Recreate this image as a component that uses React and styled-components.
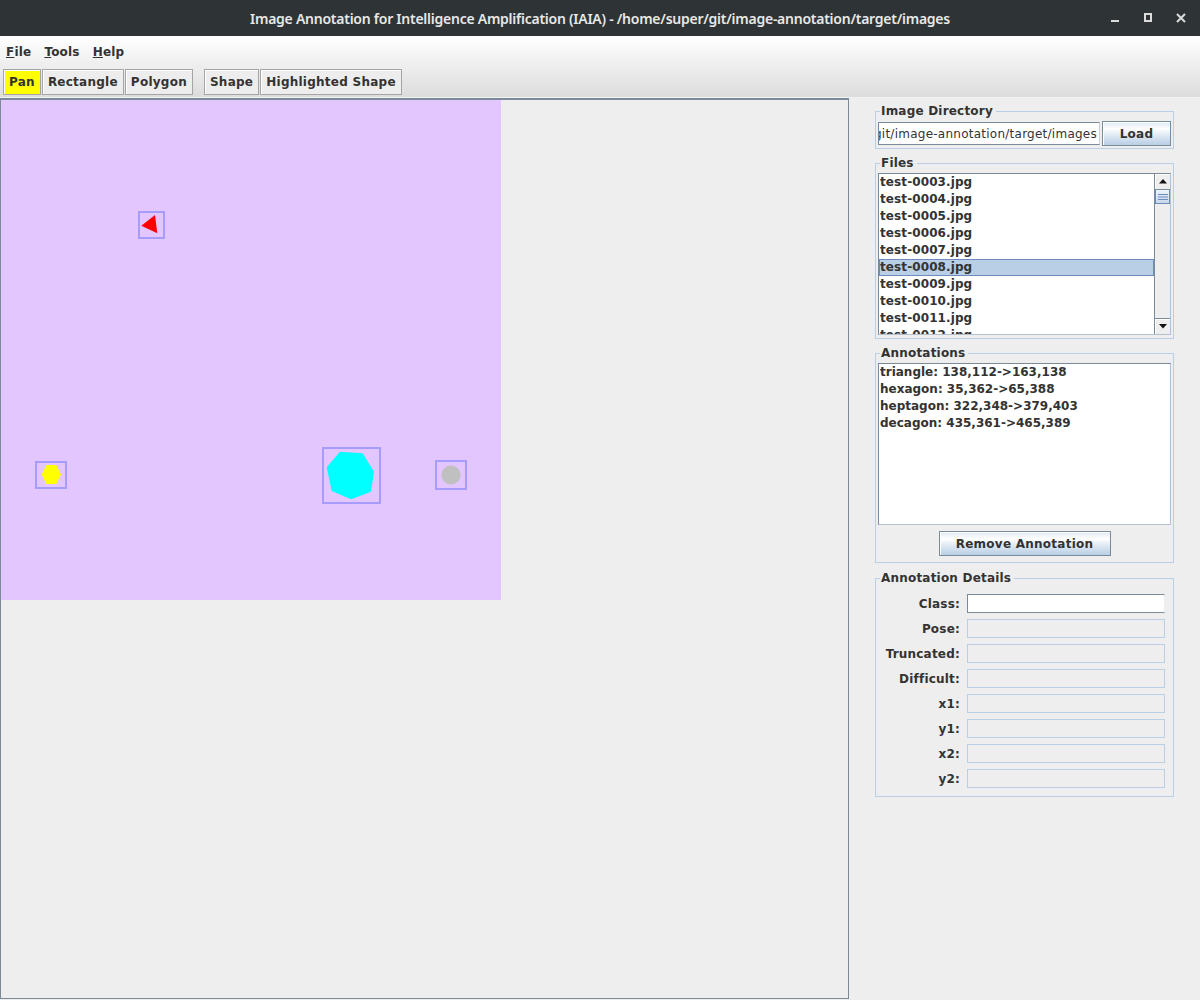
import React from "react";
import styled, { createGlobalStyle } from "styled-components";

const GlobalStyle = createGlobalStyle`
  html, body {
    margin: 0;
    padding: 0;
    background: #eeeeee;
  }
  body {
    width: 1200px;
    height: 1000px;
    overflow: hidden;
    font-family: "DejaVu Sans", "Liberation Sans", sans-serif;
    color: #333333;
  }
  * {
    box-sizing: border-box;
  }
`;

const files = [
  "test-0003.jpg",
  "test-0004.jpg",
  "test-0005.jpg",
  "test-0006.jpg",
  "test-0007.jpg",
  "test-0008.jpg",
  "test-0009.jpg",
  "test-0010.jpg",
  "test-0011.jpg",
  "test-0012.jpg",
];

const annotations = [
  "triangle: 138,112->163,138",
  "hexagon: 35,362->65,388",
  "heptagon: 322,348->379,403",
  "decagon: 435,361->465,389",
];

const details = ["Class:", "Pose:", "Truncated:", "Difficult:", "x1:", "y1:", "x2:", "y2:"];

const tools = [
  { label: "Pan", active: true },
  { label: "Rectangle" },
  { label: "Polygon" },
  { sep: true },
  { label: "Shape" },
  { label: "Highlighted Shape" },
];

// regular polygon points for the decagon
const regular = (cx, cy, r, n, rot = 0) =>
  Array.from({ length: n }, (_, i) => {
    const a = rot + (i * 2 * Math.PI) / n;
    return `${(cx + r * Math.cos(a)).toFixed(1)},${(cy + r * Math.sin(a)).toFixed(1)}`;
  }).join(" ");

const Window = styled.div`
  width: 1200px;
  height: 1000px;
  display: flex;
  flex-direction: column;
  background: #eeeeee;
  overflow: hidden;
`;

const TitleBar = styled.div`
  flex: none;
  height: 36px;
  display: grid;
  grid-template-columns: 1fr auto 1fr;
  align-items: center;
  background: #2e3335;
  color: #e8e8e7;
  font-family: "Noto Sans", "DejaVu Sans", sans-serif;
  font-size: 14px;
  font-weight: 600;
  letter-spacing: -0.25px;
`;

const TitleText = styled.div`
  grid-column: 2;
  white-space: nowrap;
`;

const WindowControls = styled.div`
  grid-column: 3;
  justify-self: end;
  display: flex;
  padding-right: 3px;
  height: 36px;
`;

const ControlButton = styled.div`
  width: 33px;
  height: 36px;
  display: flex;
  align-items: center;
  justify-content: center;
  color: #dcdcdc;
`;

const Chrome = styled.div`
  flex: none;
  background: linear-gradient(#ffffff, #dcdcdc);
  border-bottom: 1px solid #f2f2f2;
`;

const MenuBar = styled.div`
  height: 28px;
  display: flex;
  align-items: center;
  padding-top: 4px;
`;

const MenuItem = styled.div`
  padding: 0 6px;
  margin-right: 1px;
  font-size: 12px;
  font-weight: bold;
  line-height: 14px;
  letter-spacing: 0.2px;
  color: #333333;
`;

const Mnemonic = styled.span`
  text-decoration: underline;
  text-underline-offset: 1px;
`;

const ToolBar = styled.div`
  height: 33px;
  display: flex;
  align-items: flex-start;
  gap: 1px;
  padding: 5px 0 0 3px;
`;

const ToolButton = styled.div`
  height: 26px;
  padding: 0 5px;
  display: flex;
  align-items: center;
  border: 1px solid #a5a5a5;
  box-shadow: inset 1px 1px 0 #ffffff;
  background: ${(p) => (p.$active ? "#ffff00" : "#ededed")};
  font-size: 12px;
  font-weight: bold;
  letter-spacing: 0.25px;
  color: #333333;
  white-space: nowrap;
`;

const ToolSeparator = styled.div`
  width: 9px;
`;

const Main = styled.div`
  flex: 1;
  display: flex;
  min-height: 0;
`;

const CanvasPane = styled.div`
  flex: none;
  width: 849px;
  height: 901px;
  border: 1px solid #7a8a99;
  border-top-width: 2px;
  background: #eeeeee;
  overflow: hidden;
`;

const ImageCanvas = styled.svg`
  display: block;
`;

const SidePanel = styled.div`
  flex: none;
  width: 351px;
  min-width: 0;
  display: flex;
  flex-direction: column;
  padding: 6px 26px 0 26px;
`;

const Group = styled.fieldset`
  margin: ${(p) => p.$mt || 0}px 0 0 0;
  padding: ${(p) => p.$pad};
  border: 1px solid #b8cfe5;
  min-width: 0;
  width: 299px;
`;

const GroupTitle = styled.legend`
  margin-left: 2px;
  padding: 0 3px 0 1px;
  font-size: 12px;
  font-weight: bold;
  line-height: 14px;
  letter-spacing: 0.2px;
  color: #333333;
`;

const ButtonRow = styled.div`
  height: 25px;
  margin-top: ${(p) => p.$mt || 0}px;
  display: flex;
  align-items: center;
  justify-content: ${(p) => (p.$center ? "center" : "flex-start")};
  gap: 2px;
`;

const DirField = styled.div`
  flex: 1;
  min-width: 0;
  height: 23px;
  display: flex;
  align-items: center;
  justify-content: flex-end;
  overflow: hidden;
  white-space: nowrap;
  padding-right: 2px;
  background: #ffffff;
  border: 1px solid #7a8a99;
  border-right-color: #c9d3dc;
  font-size: 12px;
  letter-spacing: 0.25px;
  color: #333333;
`;

const PushButton = styled.div`
  width: ${(p) => p.$w}px;
  height: 25px;
  flex: none;
  display: flex;
  align-items: center;
  justify-content: center;
  border: 1px solid #7a8a99;
  box-shadow: inset 1px 1px 0 #ffffff;
  background: linear-gradient(#dde8f3 0%, #ffffff 30%, #dde8f3 60%, #b8cfe5 100%);
  font-size: 12px;
  font-weight: bold;
  letter-spacing: 0.25px;
  color: #333333;
`;

const ListBox = styled.div`
  height: 162px;
  display: flex;
  background: #ffffff;
  border: 1px solid #7a8a99;
  border-right-color: #b4c0cc;
  border-bottom-color: #b4c0cc;
  overflow: hidden;
`;

const ListItems = styled.div`
  flex: 1;
  min-width: 0;
  overflow: hidden;
`;

const ListRow = styled.div`
  height: 17px;
  line-height: 15px;
  border: 1px solid ${(p) => (p.$selected ? "#6d8bbd" : "transparent")};
  background: ${(p) => (p.$selected ? "#b8cfe5" : "transparent")};
  font-size: 12px;
  font-weight: bold;
  letter-spacing: ${(p) => p.$ls || 0}px;
  color: #333333;
  white-space: nowrap;
`;

const ScrollBar = styled.div`
  flex: none;
  width: 16px;
  display: flex;
  flex-direction: column;
  background: #eeeeee;
  border-left: 1px solid #7a8a99;
`;

const ScrollArrow = styled.div`
  flex: none;
  height: 16px;
  display: flex;
  align-items: center;
  justify-content: center;
  background: #eeeeee;
  border-${(p) => (p.$down ? "top" : "bottom")}: 1px solid #7a8a99;
  box-shadow: inset 1px 1px 0 #ffffff;
`;

const ScrollThumb = styled.div`
  flex: none;
  height: 14px;
  display: flex;
  align-items: center;
  justify-content: center;
  background: linear-gradient(#eef4fa, #c6d8ec);
  border: 1px solid #6d8bbd;
  border-top: none;
`;

const ScrollTrack = styled.div`
  flex: 1;
`;

const DetailsGrid = styled.div`
  display: grid;
  grid-template-columns: 1fr 198px;
  grid-auto-rows: 19px;
  column-gap: 7px;
  row-gap: 6px;
  align-items: center;
  padding-right: 6px;
`;

const DetailLabel = styled.div`
  text-align: right;
  font-size: 12px;
  font-weight: bold;
  letter-spacing: 0.2px;
  color: #333333;
  white-space: nowrap;
`;

const DetailField = styled.div`
  height: 19px;
  background: ${(p) => (p.$editable ? "#ffffff" : "#eeeeee")};
  border: 1px solid ${(p) => (p.$editable ? "#7a8a99" : "#b8cfe5")};
  border-right-color: ${(p) => (p.$editable ? "#eeeeee" : "#b8cfe5")};
`;

const Arrow = ({ down }) => (
  <svg width="8" height="5" viewBox="0 0 8 5">
    <polygon points={down ? "0,0 8,0 4,4.5" : "0,4.5 8,4.5 4,0"} fill="#111" />
  </svg>
);

const Grip = () => (
  <svg width="10" height="6" viewBox="0 0 10 6">
    <rect x="0" y="0" width="10" height="1" fill="#6d8bbd" />
    <rect x="0" y="2.5" width="10" height="1" fill="#6d8bbd" />
    <rect x="0" y="5" width="10" height="1" fill="#6d8bbd" />
  </svg>
);

const BoxStroke = "#a69cfc";

const Annotated = ({ x, y, w, h }) => (
  <rect x={x} y={y} width={w} height={h} fill="none" stroke={BoxStroke} strokeWidth="2" />
);

const App = () => {
  return (
    <>
      <GlobalStyle />
      <Window>
        <TitleBar>
          <TitleText>
            Image Annotation for Intelligence Amplification (IAIA) - /home/super/git/image-annotation/target/images
          </TitleText>
          <WindowControls>
            <ControlButton>
              <svg width="16" height="16" viewBox="0 0 16 16">
                <rect x="4" y="10" width="8" height="2" fill="currentColor" />
              </svg>
            </ControlButton>
            <ControlButton>
              <svg width="16" height="16" viewBox="0 0 16 16">
                <rect x="5" y="4" width="6" height="7" fill="none" stroke="currentColor" strokeWidth="2" />
              </svg>
            </ControlButton>
            <ControlButton>
              <svg width="16" height="16" viewBox="0 0 16 16">
                <path d="M4 4 L12 12 M12 4 L4 12" stroke="currentColor" strokeWidth="2" />
              </svg>
            </ControlButton>
          </WindowControls>
        </TitleBar>

        <Chrome>
          <MenuBar>
            <MenuItem><Mnemonic>F</Mnemonic>ile</MenuItem>
            <MenuItem><Mnemonic>T</Mnemonic>ools</MenuItem>
            <MenuItem><Mnemonic>H</Mnemonic>elp</MenuItem>
          </MenuBar>
          <ToolBar>
            {tools.map((t, i) =>
              t.sep ? (
                <ToolSeparator key={i} />
              ) : (
                <ToolButton key={i} $active={t.active}>{t.label}</ToolButton>
              )
            )}
          </ToolBar>
        </Chrome>

        <Main>
          <CanvasPane>
            <ImageCanvas width="500" height="500" viewBox="0 0 500 500">
              <rect x="0" y="0" width="500" height="500" fill="#e3c6fd" />
              <polygon points="140.3,125.7 154,115 156.3,133.3" fill="#ff0000" />
              <Annotated x={138} y={112} w={25} h={26} />
              <polygon points="40.7,374.5 45.5,365 55.2,365 60,374.5 55.2,384 45.5,384" fill="#ffff00" />
              <Annotated x={35} y={362} w={30} h={26} />
              <polygon
                points="325.7,367.3 339,351.7 361.7,353.3 373,371.7 370,391.7 350,399.3 330.7,391"
                fill="#00ffff"
              />
              <Annotated x={322} y={348} w={57} h={55} />
              <polygon points={regular(450, 375, 9.8, 10)} fill="#c0c0c0" />
              <Annotated x={435} y={361} w={30} h={28} />
            </ImageCanvas>
          </CanvasPane>

          <SidePanel>
            <Group $pad="3px 2px 2px 2px">
              <GroupTitle>Image Directory</GroupTitle>
              <ButtonRow>
                <DirField>/home/super/git/image-annotation/target/images</DirField>
                <PushButton $w={69}>Load</PushButton>
              </ButtonRow>
            </Group>

            <Group $mt={7} $pad="3px 2px 3px 2px">
              <GroupTitle>Files</GroupTitle>
              <ListBox>
                <ListItems>
                  {files.map((f) => (
                    <ListRow key={f} $ls={0.1} $selected={f === "test-0008.jpg"}>{f}</ListRow>
                  ))}
                </ListItems>
                <ScrollBar>
                  <ScrollArrow><Arrow /></ScrollArrow>
                  <ScrollThumb><Grip /></ScrollThumb>
                  <ScrollTrack />
                  <ScrollArrow $down><Arrow down /></ScrollArrow>
                </ScrollBar>
              </ListBox>
            </Group>

            <Group $mt={7} $pad="3px 2px 6px 2px">
              <GroupTitle>Annotations</GroupTitle>
              <ListBox>
                <ListItems>
                  {annotations.map((a) => (
                    <ListRow key={a}>{a}</ListRow>
                  ))}
                </ListItems>
              </ListBox>
              <ButtonRow $center $mt={6}>
                <PushButton $w={172}>Remove Annotation</PushButton>
              </ButtonRow>
            </Group>

            <Group $mt={8} $pad="9px 2px 8px 2px">
              <GroupTitle>Annotation Details</GroupTitle>
              <DetailsGrid>
                {details.map((d, i) => (
                  <React.Fragment key={d}>
                    <DetailLabel>{d}</DetailLabel>
                    <DetailField $editable={i === 0} />
                  </React.Fragment>
                ))}
              </DetailsGrid>
            </Group>
          </SidePanel>
        </Main>
      </Window>
    </>
  );
};

export default App;
